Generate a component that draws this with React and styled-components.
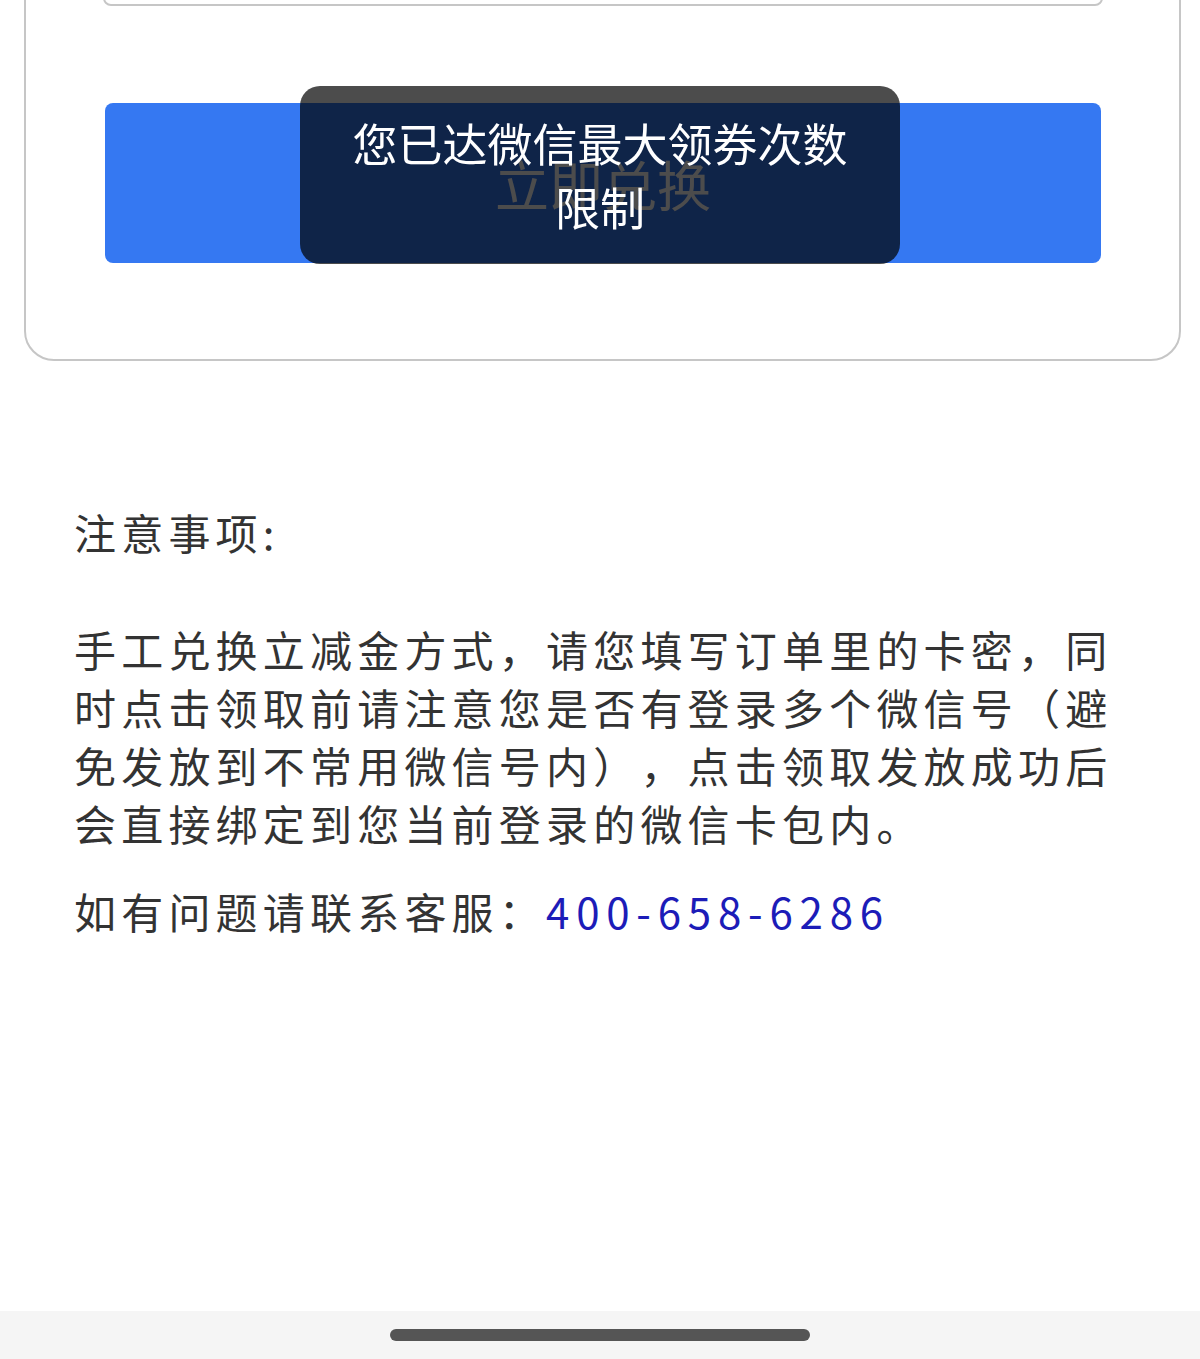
import React from 'react';
import styled, { createGlobalStyle } from 'styled-components';

const GlobalStyle = createGlobalStyle`
  html, body {
    margin: 0;
    padding: 0;
    background: #ffffff;
    font-family: "Noto Sans CJK SC", "Noto Sans", sans-serif;
    text-spacing-trim: space-all;
    overflow: hidden;
  }
`;

export default function App() {
  return (
    <>
      <GlobalStyle />
      <Page>
        <RedeemCard>
          <CodeInput type="text" />
          <RedeemButton type="button">立即兑换</RedeemButton>
        </RedeemCard>

        <Notes>
          <NotesTitle>注意事项:</NotesTitle>
          <NotesBody>
            手工兑换立减金方式，请您填写订单里的卡密，同时点击领取前请注意您是否有登录多个微信号（避免发放到不常用微信号内），点击领取发放成功后会直接绑定到您当前登录的微信卡包内。
          </NotesBody>
          <Contact>
            如有问题请联系客服：<Phone href="tel:400-658-6286">400-658-6286</Phone>
          </Contact>
        </Notes>

        <Filler />
        <NavBar>
          <NavHandle />
        </NavBar>
      </Page>

      <Toast>您已达微信最大领券次数限制</Toast>
    </>
  );
}

const Page = styled.div`
  min-height: 100vh;
  display: flex;
  flex-direction: column;
`;

const RedeemCard = styled.div`
  box-sizing: border-box;
  width: 1157px;
  margin: -176px 0 0 24px;
  padding: 60px 76px 96px 77px;
  display: flex;
  flex-direction: column;
  gap: 97px;
  border: 2px solid #c6c6c6;
  border-radius: 30px;
  background: #fff;
`;

const CodeInput = styled.input`
  box-sizing: border-box;
  width: 1000px;
  height: 120px;
  border: 2px solid #c6c6c6;
  border-radius: 8px;
  outline: none;
  background: #fff;
`;

const RedeemButton = styled.button`
  box-sizing: border-box;
  width: 996px;
  height: 160px;
  margin-left: 2px;
  border: none;
  border-radius: 8px;
  background: #3578f2;
  color: #fff;
  font-family: inherit;
  font-size: 54px;
  cursor: pointer;
`;

const Notes = styled.div`
  margin: 142px 0 0 74px;
  width: 1052px;
  color: #333;
  font-size: 42px;
  line-height: 58px;
  letter-spacing: 5.2px;
`;

const NotesTitle = styled.div`
  margin-bottom: 59px;
`;

const NotesBody = styled.p`
  margin: 0 0 30px;
`;

const Contact = styled.div``;

const Phone = styled.a`
  color: #1c1cb8;
  text-decoration: none;
  letter-spacing: 6.8px;
`;

const Filler = styled.div`
  flex: 1;
`;

const NavBar = styled.div`
  height: 48px;
  background: #f5f5f5;
  display: flex;
  justify-content: center;
  padding-top: 18px;
  box-sizing: border-box;
`;

const NavHandle = styled.div`
  width: 420px;
  height: 12px;
  border-radius: 6px;
  background: #555;
`;

const Toast = styled.div`
  position: fixed;
  top: 86px;
  left: 50%;
  transform: translateX(-50%);
  box-sizing: border-box;
  width: 600px;
  padding: 25px 40px;
  border-radius: 20px;
  background: rgba(0, 0, 0, 0.7);
  color: #fff;
  font-size: 45px;
  line-height: 64px;
  text-align: center;
`;
